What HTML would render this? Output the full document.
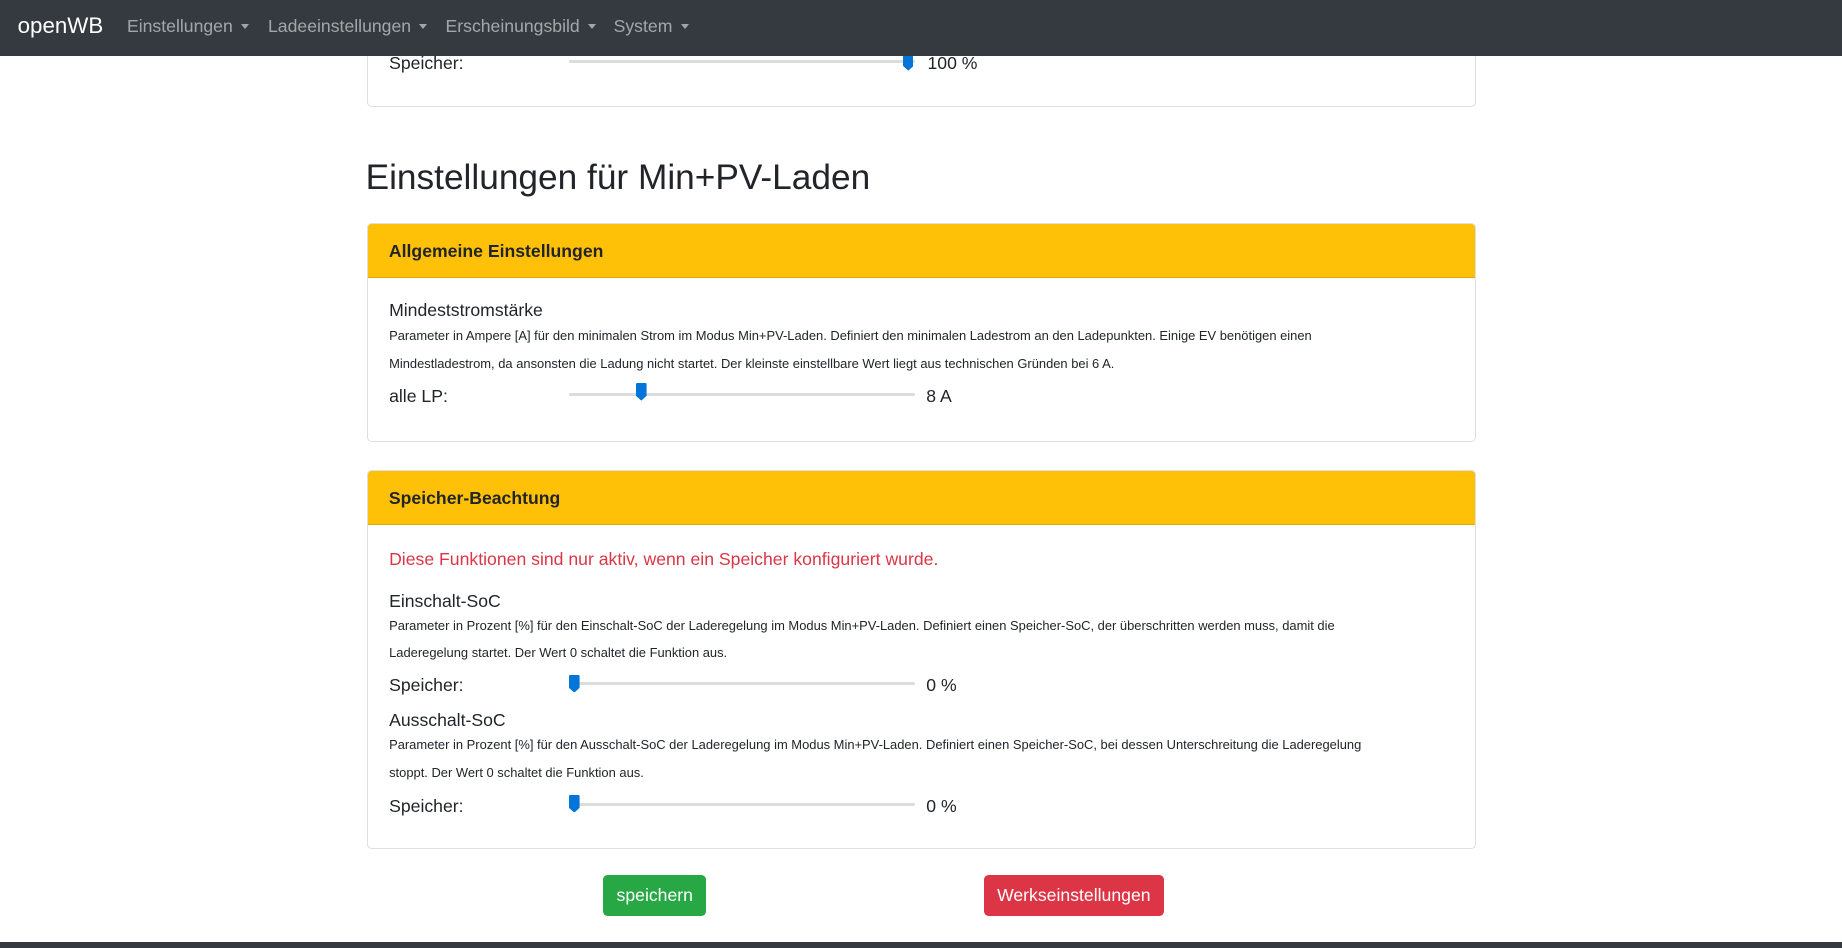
<!DOCTYPE html>
<html><head><meta charset="utf-8"><style>
*{box-sizing:border-box;margin:0;padding:0}
html,body{width:1842px;height:948px;overflow:hidden;background:#fff}
#w{zoom:1.1755;position:relative;width:1567px;height:807px;font-family:"Liberation Sans",sans-serif;color:#212529}
.a{position:absolute;white-space:nowrap}
.nav{position:absolute;left:0;top:0;width:1567px;height:47.5px;background:#343a40;z-index:10}
.nav .b{position:absolute;top:11px;left:15px;font-size:19px;color:#fff}
.nav .i{position:absolute;top:14px;font-size:15px;color:rgba(255,255,255,.55)}
.nav .i:after{content:"";display:inline-block;margin-left:7px;vertical-align:3px;border-top:5px solid rgba(255,255,255,.55);border-left:4px solid transparent;border-right:4px solid transparent}
.card{position:absolute;left:312px;width:944px;border:1px solid #dfdfdf;border-radius:4px;background:#fff}
.hd{position:absolute;left:0;top:0;right:0;height:46px;background:#ffc107;border-bottom:1px solid #e0a800;border-radius:3px 3px 0 0}
.hd span{position:absolute;left:18px;top:14px;font-size:15px;font-weight:bold;color:#212529}
.t{font-size:15px}
.s{font-size:11px}
.tr{position:absolute;left:484px;width:294px;height:3px;background:#dcdcdc;border-radius:2px}
.th{position:absolute;width:9px;height:15px}
</style></head><body><div id="w">
<div class="card" style="top:20px;height:71px;border-top:none;border-radius:0 0 4px 4px"></div>
<span class="a t" style="left:331px;top:45px">Speicher:</span>
<div class="tr" style="top:51px"></div>
<svg class="th a" style="left:768px;top:45px" viewBox="0 0 9 15"><path d="M1 0H8Q9 0 9 1V11L4.5 15L0 11V1Q0 0 1 0Z" fill="#0275d8"/></svg>
<span class="a t" style="left:789px;top:45px">100 %</span>

<div class="nav"><span class="b">openWB</span>
<span class="i" style="left:108px">Einstellungen</span>
<span class="i" style="left:228px">Ladeeinstellungen</span>
<span class="i" style="left:379px">Erscheinungsbild</span>
<span class="i" style="left:522px">System</span></div>

<span class="a" style="left:311px;top:134px;font-size:30px">Einstellungen für Min+PV-Laden</span>

<div class="card" style="top:190px;height:186px"><div class="hd"><span>Allgemeine Einstellungen</span></div></div>
<span class="a t" style="left:331px;top:255px">Mindeststromstärke</span>
<span class="a s" style="left:331px;top:279px">Parameter in Ampere [A] für den minimalen Strom im Modus Min+PV-Laden. Definiert den minimalen Ladestrom an den Ladepunkten. Einige EV benötigen einen</span>
<span class="a s" style="left:331px;top:303px">Mindestladestrom, da ansonsten die Ladung nicht startet. Der kleinste einstellbare Wert liegt aus technischen Gründen bei 6 A.</span>
<span class="a t" style="left:331px;top:328px">alle LP:</span>
<div class="tr" style="top:334px"></div>
<svg class="th a" style="left:541px;top:326px" viewBox="0 0 9 15"><path d="M1 0H8Q9 0 9 1V11L4.5 15L0 11V1Q0 0 1 0Z" fill="#0275d8"/></svg>
<span class="a t" style="left:788px;top:328px">8 A</span>

<div class="card" style="top:400px;height:322px"><div class="hd"><span>Speicher-Beachtung</span></div></div>
<span class="a t" style="left:331px;top:467px;color:#dc3545">Diese Funktionen sind nur aktiv, wenn ein Speicher konfiguriert wurde.</span>
<span class="a t" style="left:331px;top:503px">Einschalt-SoC</span>
<span class="a s" style="left:331px;top:526px">Parameter in Prozent [%] für den Einschalt-SoC der Laderegelung im Modus Min+PV-Laden. Definiert einen Speicher-SoC, der überschritten werden muss, damit die</span>
<span class="a s" style="left:331px;top:549px">Laderegelung startet. Der Wert 0 schaltet die Funktion aus.</span>
<span class="a t" style="left:331px;top:574px">Speicher:</span>
<div class="tr" style="top:580px"></div>
<svg class="th a" style="left:484px;top:574px" viewBox="0 0 9 15"><path d="M1 0H8Q9 0 9 1V11L4.5 15L0 11V1Q0 0 1 0Z" fill="#0275d8"/></svg>
<span class="a t" style="left:788px;top:574px">0 %</span>
<span class="a t" style="left:331px;top:604px">Ausschalt-SoC</span>
<span class="a s" style="left:331px;top:627px">Parameter in Prozent [%] für den Ausschalt-SoC der Laderegelung im Modus Min+PV-Laden. Definiert einen Speicher-SoC, bei dessen Unterschreitung die Laderegelung</span>
<span class="a s" style="left:331px;top:651px">stoppt. Der Wert 0 schaltet die Funktion aus.</span>
<span class="a t" style="left:331px;top:677px">Speicher:</span>
<div class="tr" style="top:683px"></div>
<svg class="th a" style="left:484px;top:676px" viewBox="0 0 9 15"><path d="M1 0H8Q9 0 9 1V11L4.5 15L0 11V1Q0 0 1 0Z" fill="#0275d8"/></svg>
<span class="a t" style="left:788px;top:677px">0 %</span>

<div class="a t" style="left:513px;top:744px;width:88px;height:35px;background:#28a745;border-radius:4px;color:#fff;text-align:center;line-height:35px">speichern</div>
<div class="a t" style="left:837px;top:744px;width:153px;height:35px;background:#dc3545;border-radius:4px;color:#fff;text-align:center;line-height:35px">Werkseinstellungen</div>
<div class="a" style="left:0;top:801px;width:1567px;height:6px;background:#343a40"></div>
</div></body></html>
